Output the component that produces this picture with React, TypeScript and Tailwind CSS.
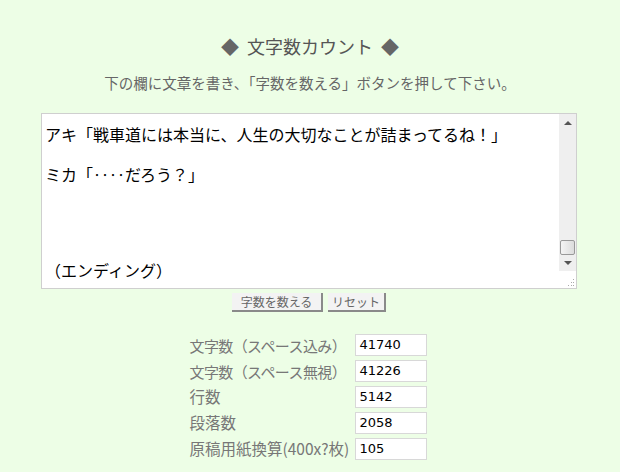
import React from "react";

const jp = { fontFamily: '"Noto Sans CJK JP", "Noto Sans", sans-serif' };

function Row({ label, value, tight }: { label: string; value: string; tight?: boolean }) {
  return (
    <div className="flex items-center h-[26px]">
      <div
        className={
          tight
            ? "w-[165px] text-[15px] text-[#777] leading-none whitespace-nowrap tracking-[-0.6px]"
            : "w-[165px] text-[15.5px] text-[#777] leading-none whitespace-nowrap"
        }
      >
        {label}
      </div>
      <div className="w-[72px] h-[22px] bg-white border border-[#d8d8d8] flex items-center pl-[4px] text-[13px] text-black" style={{ fontFamily: '"DejaVu Sans", sans-serif' }}>
        {value}
      </div>
    </div>
  );
}

export default function App() {
  return (
    <div className="w-[620px] h-[472px] bg-[#edfee6] overflow-hidden" style={jp}>
      <div className="pt-[33px] flex justify-center items-center text-[18px] text-[#555] leading-[26px]">
        <span className="text-[#666]">◆</span>
        <span className="mx-[8px]">文字数カウント</span>
        <span className="text-[#666]">◆</span>
      </div>
      <div className="mt-[14px] text-center text-[14.5px] text-[#666] leading-[20px]">
        下の欄に文章を書き、「字数を数える」ボタンを押して下さい。
      </div>
      <div className="mt-[20px] ml-[41px] w-[536px] h-[176px] bg-white border border-[#cfcfcf] flex">
        <div className="flex-1 pl-[3px] text-[16px] text-black leading-[20px] relative">
          <div className="mt-[10px]">アキ「戦車道には本当に、人生の大切なことが詰まってるね！」</div>
          <div className="mt-[20px]">ミカ「‥‥だろう？」</div>
          <div className="mt-[76px]">（エンディング）</div>
        </div>
        <div className="w-[17px] flex flex-col">
          <div className="h-[157px] bg-[#efefef] flex flex-col items-center">
            <div className="h-[16px] flex items-center justify-center">
              <svg width="8" height="5" viewBox="0 0 8 5"><path d="M0 5 L4 1 L8 5 Z" fill="#555" /></svg>
            </div>
            <div className="flex-1" />
            <div className="w-[15px] h-[15px] border border-[#999] bg-gradient-to-r from-[#f4f4f4] to-[#dcdcdc] rounded-[2px]" />
            <div className="h-[16px] flex items-center justify-center">
              <svg width="8" height="5" viewBox="0 0 8 5"><path d="M0 0 L4 4 L8 0 Z" fill="#555" /></svg>
            </div>
          </div>
          <div className="flex-1 flex items-end justify-end pr-[1px] pb-[1px]">
            <svg width="9" height="9" viewBox="0 0 9 9">
              <rect x="7" y="1" width="1" height="1" fill="#aaa" />
              <rect x="5" y="4" width="1" height="1" fill="#aaa" />
              <rect x="7" y="4" width="1" height="1" fill="#aaa" />
              <rect x="2" y="7" width="1" height="1" fill="#aaa" />
              <rect x="5" y="7" width="1" height="1" fill="#aaa" />
              <rect x="7" y="7" width="1" height="1" fill="#aaa" />
            </svg>
          </div>
        </div>
      </div>
      <div className="mt-[4px] flex justify-center gap-[5px] pr-[2px]">
        <div className="w-[91px] h-[19px] bg-[#f3f3f3] border-r-2 border-b-2 border-[#8a8a8a] flex items-center justify-center text-[12px] text-[#666]">字数を数える</div>
        <div className="w-[58px] h-[19px] bg-[#f3f3f3] border-r-2 border-b-2 border-[#8a8a8a] flex items-center justify-center text-[12px] text-[#666]">リセット</div>
      </div>
      <div className="mt-[20px] flex justify-center pr-[4px]">
        <div className="flex flex-col">
          <Row label="文字数（スペース込み）" value="41740" tight />
          <Row label="文字数（スペース無視）" value="41226" tight />
          <Row label="行数" value="5142" />
          <Row label="段落数" value="2058" />
          <Row label="原稿用紙換算(400x?枚)" value="105" />
        </div>
      </div>
    </div>
  );
}
